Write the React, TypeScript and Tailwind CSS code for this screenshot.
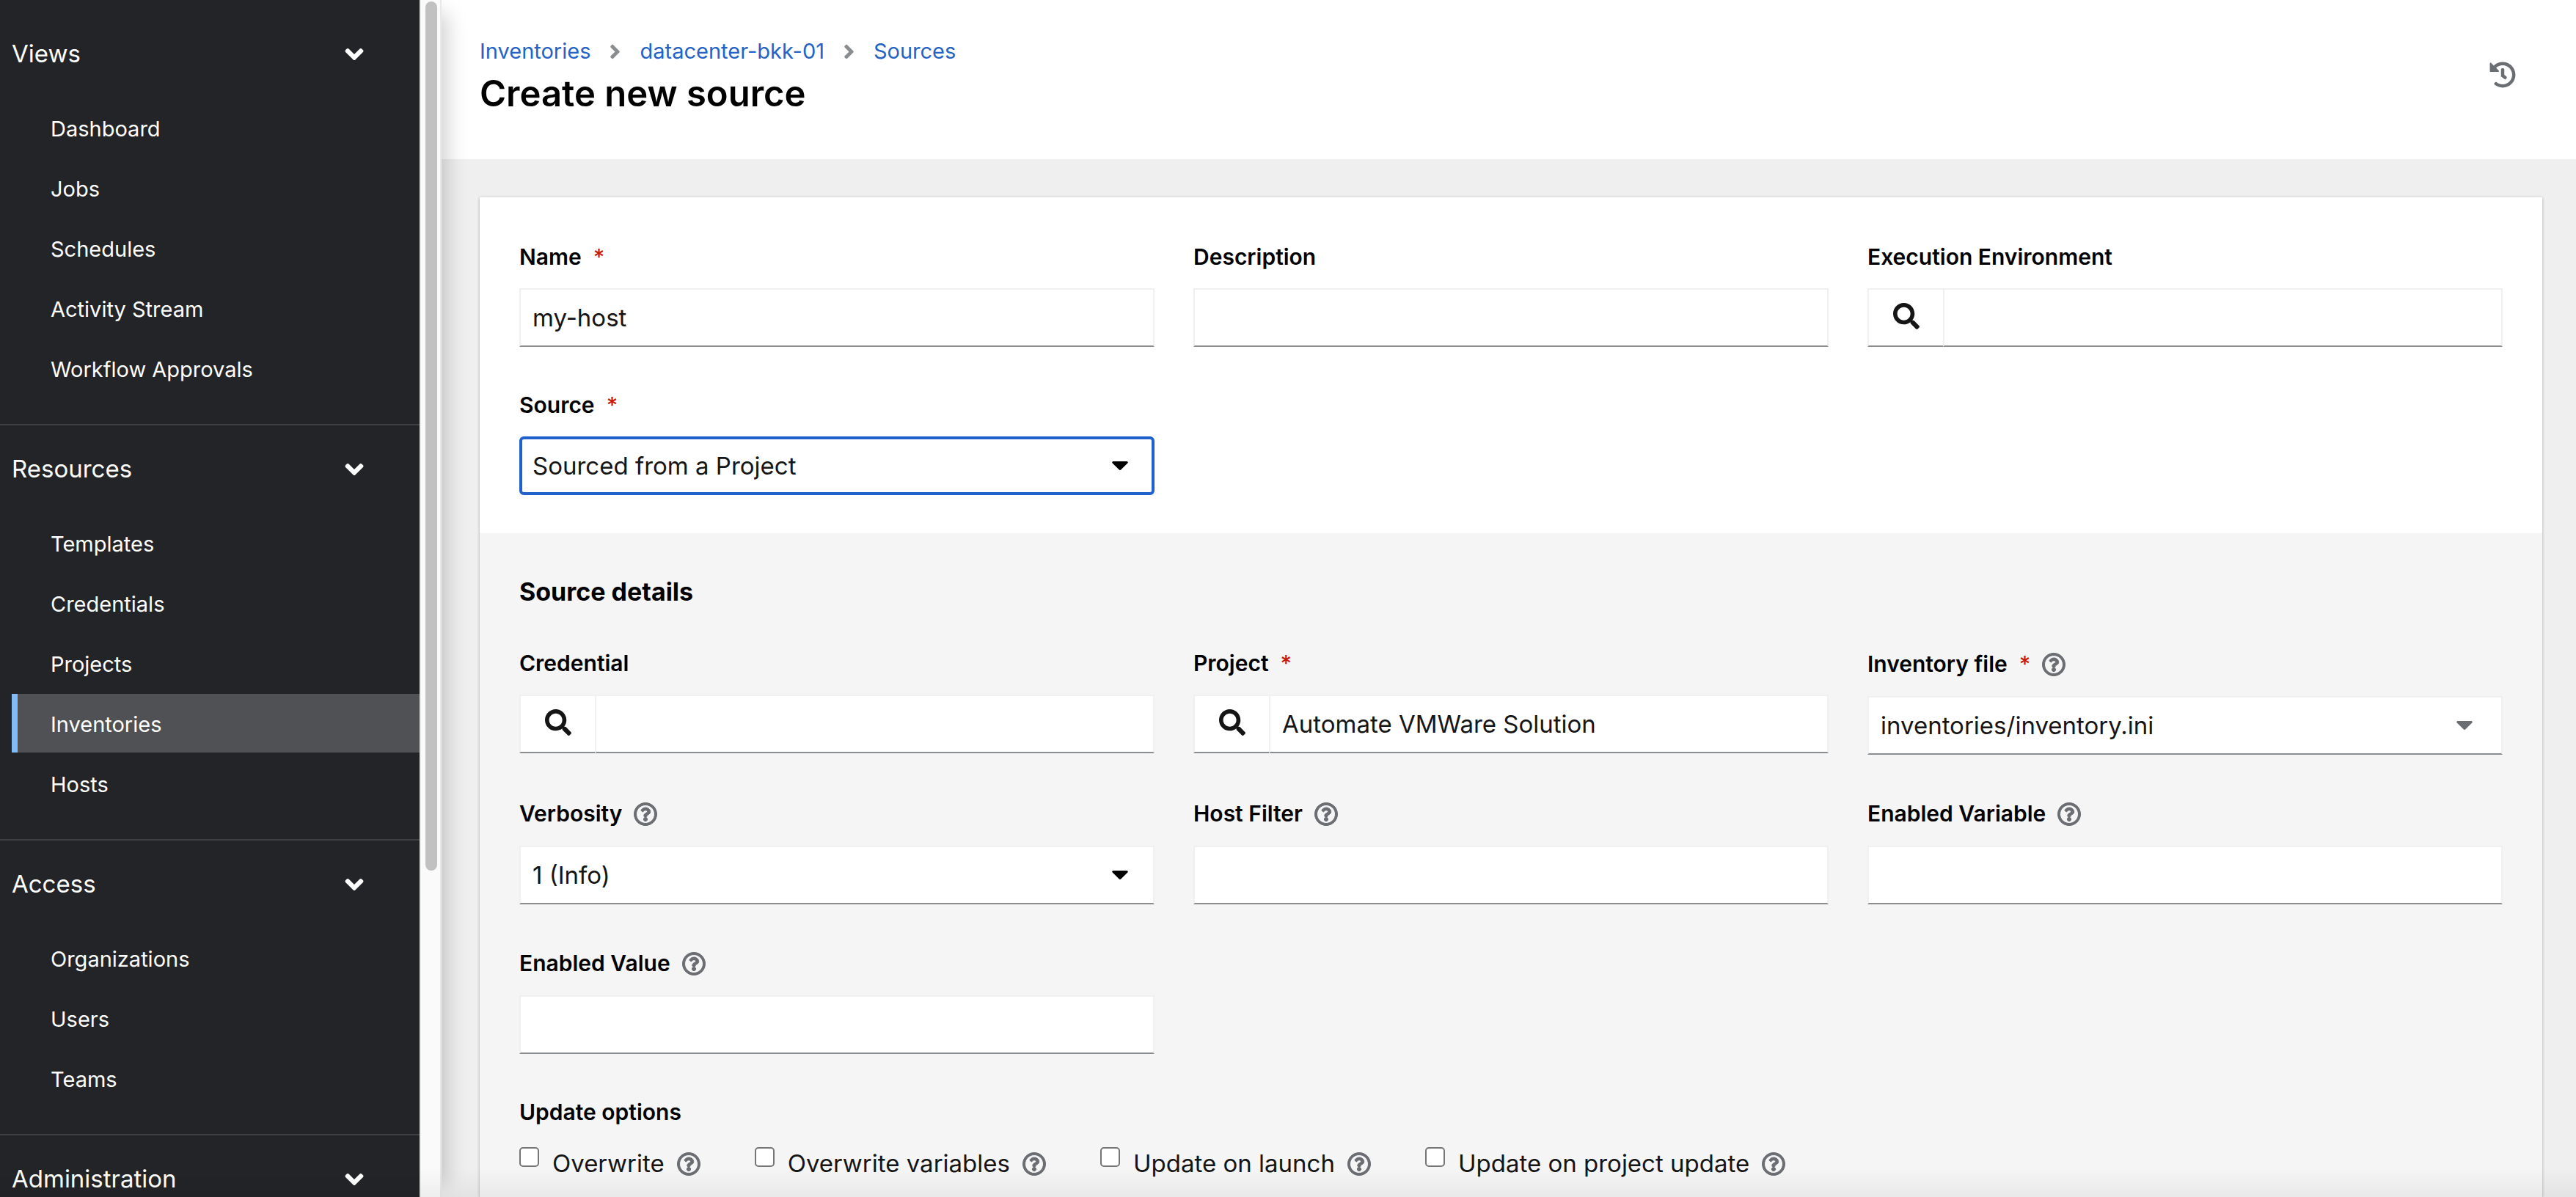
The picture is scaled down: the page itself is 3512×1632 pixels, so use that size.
import React from 'react';
import {
  FaAngleDown,
  FaAngleRight,
  FaHistory,
  FaRegQuestionCircle,
  FaSearch,
} from 'react-icons/fa';

const sections = [
  {
    title: 'Views',
    items: ['Dashboard', 'Jobs', 'Schedules', 'Activity Stream', 'Workflow Approvals'],
  },
  {
    title: 'Resources',
    items: ['Templates', 'Credentials', 'Projects', 'Inventories', 'Hosts'],
  },
  { title: 'Access', items: ['Organizations', 'Users', 'Teams'] },
  { title: 'Administration', items: [] },
];

const breadcrumbs = ['Inventories', 'datacenter-bkk-01', 'Sources'];

const updateOptions = [
  'Overwrite',
  'Overwrite variables',
  'Update on launch',
  'Update on project update',
];

const controlBox =
  'w-full h-20 bg-white border-2 border-[#f0f0f0] border-b-[#8a8d90] text-[33px] leading-[53px] text-[#151515] outline-none rounded-none';

function NavSection({ title, items, first }: { title: string; items: string[]; first: boolean }) {
  return (
    <section className={first ? 'pt-[34px] pb-9' : 'border-t-2 border-[#3d3f43] pt-5 pb-9'}>
      <button
        type="button"
        aria-expanded="true"
        className="flex h-20 w-full items-center justify-between pl-4 pr-[69px] text-[33px]"
      >
        {title}
        <FaAngleDown className="size-10" />
      </button>
      <ul className="flex flex-col gap-0.5 pt-5 pl-4">
        {items.map((item) => (
          <li key={item}>
            <a
              href="#"
              className={
                item === 'Inventories'
                  ? 'flex h-20 items-center border-l-8 border-[#83bbf5] bg-[#505155] pt-1 pl-[45px]'
                  : 'flex h-20 items-center pt-1 pl-[53px]'
              }
            >
              {item}
            </a>
          </li>
        ))}
      </ul>
    </section>
  );
}

function Sidebar() {
  return (
    <aside className="relative z-10 flex w-[602px] shrink-0 shadow-[26px_0_26px_-18px_rgba(3,3,3,0.18)]">
      <nav className="flex-1 overflow-hidden bg-[#232428] text-[29px] text-white">
        {sections.map((s, i) => (
          <NavSection key={s.title} title={s.title} items={s.items} first={i === 0} />
        ))}
      </nav>
      <div className="w-[30px] border-x-2 border-[#e8e8e8] bg-[#fafafa] px-1.5 pt-0.5">
        <div className="h-8/11 w-4 rounded-full bg-[#c1c1c1]" />
      </div>
    </aside>
  );
}

function HelpButton({ topic }: { topic: string }) {
  return (
    <button type="button" aria-label={`More information for ${topic}`} className="text-[#6a6e73]">
      <FaRegQuestionCircle className="size-8 overflow-visible stroke-[16px]" />
    </button>
  );
}

type FieldProps = {
  id: string;
  label: string;
  required?: boolean;
  help?: boolean;
  children: React.ReactNode;
};

function Field({ id, label, required, help, children }: FieldProps) {
  return (
    <div className="flex flex-col gap-[18px]">
      <div
        className={
          help
            ? 'flex h-[55px] items-center gap-4 pt-1'
            : 'flex h-[53px] items-center gap-4 pt-1'
        }
      >
        <label htmlFor={id} className="flex text-[30px] leading-[53px] font-semibold text-black">
          {label}
          {required && (
            <span aria-hidden="true" className="pl-4 font-medium text-[#c9190b]">
              *
            </span>
          )}
        </label>
        {help && <HelpButton topic={label} />}
      </div>
      {children}
    </div>
  );
}

function TextInput({ id, value }: { id: string; value?: string }) {
  return <input id={id} type="text" defaultValue={value} className={`${controlBox} px-4`} />;
}

function LookupInput({ id, value }: { id: string; value?: string }) {
  return (
    <div className="flex">
      <button
        type="button"
        aria-label="Search"
        className="flex h-20 w-[103px] shrink-0 items-center justify-center border-2 border-r-0 border-[#f0f0f0] border-b-[#8a8d90] bg-white pb-1 text-[#151515]"
      >
        <FaSearch className="size-9" />
      </button>
      <input id={id} type="text" defaultValue={value} className={`${controlBox} px-4`} />
    </div>
  );
}

function Caret() {
  return (
    <svg viewBox="0 0 22 12" className="h-3 w-[22px]" fill="currentColor" aria-hidden="true">
      <path d="M2 0h18c1.6 0 2.4 1.5 1.3 2.6l-8.9 8.7c-.8.8-2 .8-2.8 0L.7 2.6C-.4 1.5.4 0 2 0z" />
    </svg>
  );
}

function SelectInput({
  id,
  value,
  focused,
  muted,
}: {
  id: string;
  value: string;
  focused?: boolean;
  muted?: boolean;
}) {
  return (
    <div className="relative">
      <select
        id={id}
        defaultValue={value}
        className={
          focused
            ? 'h-20 w-full appearance-none rounded-md border-4 border-[#2161cc] bg-white px-3.5 text-[33px] leading-[53px] text-[#151515] outline-none'
            : `${controlBox} appearance-none px-4`
        }
      >
        <option>{value}</option>
      </select>
      <span
        className={
          muted
            ? 'pointer-events-none absolute inset-y-0 right-[41px] flex items-center text-[#6a6e73]'
            : 'pointer-events-none absolute inset-y-0 right-9 flex items-center text-black'
        }
      >
        <Caret />
      </span>
    </div>
  );
}

function PageHeader() {
  return (
    <header className="flex items-start justify-between bg-white pt-12 pr-[82px] pb-[53px] pl-[52px]">
      <div>
        <nav aria-label="Breadcrumb">
          <ol className="flex h-11 items-center text-[29px] text-[#2463c5]">
            {breadcrumbs.map((b, i) => (
              <li key={b} className="flex items-center">
                {i > 0 && <FaAngleRight className="mx-[18px] size-[31px] text-[#8a8d90]" />}
                <a href="#">{b}</a>
              </li>
            ))}
          </ol>
        </nav>
        <h1 className="text-[49px] leading-[72px] font-semibold text-black">Create new source</h1>
      </div>
      <button type="button" aria-label="View activity stream" className="mt-9 text-[#6a6e73]">
        <FaHistory className="size-9" />
      </button>
    </header>
  );
}

export default function App() {
  return (
    <div className="relative flex h-screen overflow-hidden bg-[#efefef] font-['Inter',sans-serif]">
      <Sidebar />
      <div className="flex min-w-0 flex-1 flex-col">
        <PageHeader />
        <main className="flex flex-1 flex-col pt-[52px] pr-[46px] pl-[52px]">
          <form className="flex flex-1 flex-col bg-white shadow-[0_2px_4px_rgba(3,3,3,0.16),0_0_4px_rgba(3,3,3,0.14)]">
            <div className="grid grid-cols-3 items-start gap-x-[53px] gap-y-[51px] px-[54px] pt-[53px] pb-[52px]">
              <Field id="name" label="Name" required>
                <TextInput id="name" value="my-host" />
              </Field>
              <Field id="description" label="Description">
                <TextInput id="description" />
              </Field>
              <Field id="execution-environment" label="Execution Environment">
                <LookupInput id="execution-environment" />
              </Field>
              <Field id="source" label="Source" required>
                <SelectInput id="source" value="Sourced from a Project" focused />
              </Field>
            </div>

            <div className="flex-1 bg-[#f5f5f5] px-[54px] pt-[53px]">
              <h2 className="text-[34px] leading-[53px] font-bold text-black">Source details</h2>
              <div className="mt-[43px] grid grid-cols-3 items-start gap-x-[53px] gap-y-[51px]">
                <Field id="credential" label="Credential">
                  <LookupInput id="credential" />
                </Field>
                <Field id="project" label="Project" required>
                  <LookupInput id="project" value="Automate VMWare Solution" />
                </Field>
                <Field id="inventory-file" label="Inventory file" required help>
                  <SelectInput id="inventory-file" value="inventories/inventory.ini" muted />
                </Field>
                <Field id="verbosity" label="Verbosity" help>
                  <SelectInput id="verbosity" value="1 (Info)" />
                </Field>
                <Field id="host-filter" label="Host Filter" help>
                  <TextInput id="host-filter" />
                </Field>
                <Field id="enabled-variable" label="Enabled Variable" help>
                  <TextInput id="enabled-variable" />
                </Field>
                <Field id="enabled-value" label="Enabled Value" help>
                  <TextInput id="enabled-value" />
                </Field>
              </div>

              <fieldset className="mt-[51px]">
                <legend className="pt-0.5 text-[30px] leading-[53px] font-semibold text-black">
                  Update options
                </legend>
                <div className="mt-4 flex flex-wrap gap-x-[74px]">
                  {updateOptions.map((option) => (
                    <div key={option} className="flex h-[55px] items-center gap-[17px]">
                      <label className="flex items-start gap-[18px] text-[33px] leading-[55px] text-[#151515]">
                        <input
                          type="checkbox"
                          className="mt-[5px] size-[27px] appearance-none rounded-[5px] border-2 border-[#767676] bg-white"
                        />
                        {option}
                      </label>
                      <HelpButton topic={option} />
                    </div>
                  ))}
                </div>
              </fieldset>
            </div>
          </form>
        </main>
      </div>
      <div className="pointer-events-none absolute inset-x-0 bottom-0 z-20 h-10 bg-linear-to-b from-transparent to-black/5" />
    </div>
  );
}
